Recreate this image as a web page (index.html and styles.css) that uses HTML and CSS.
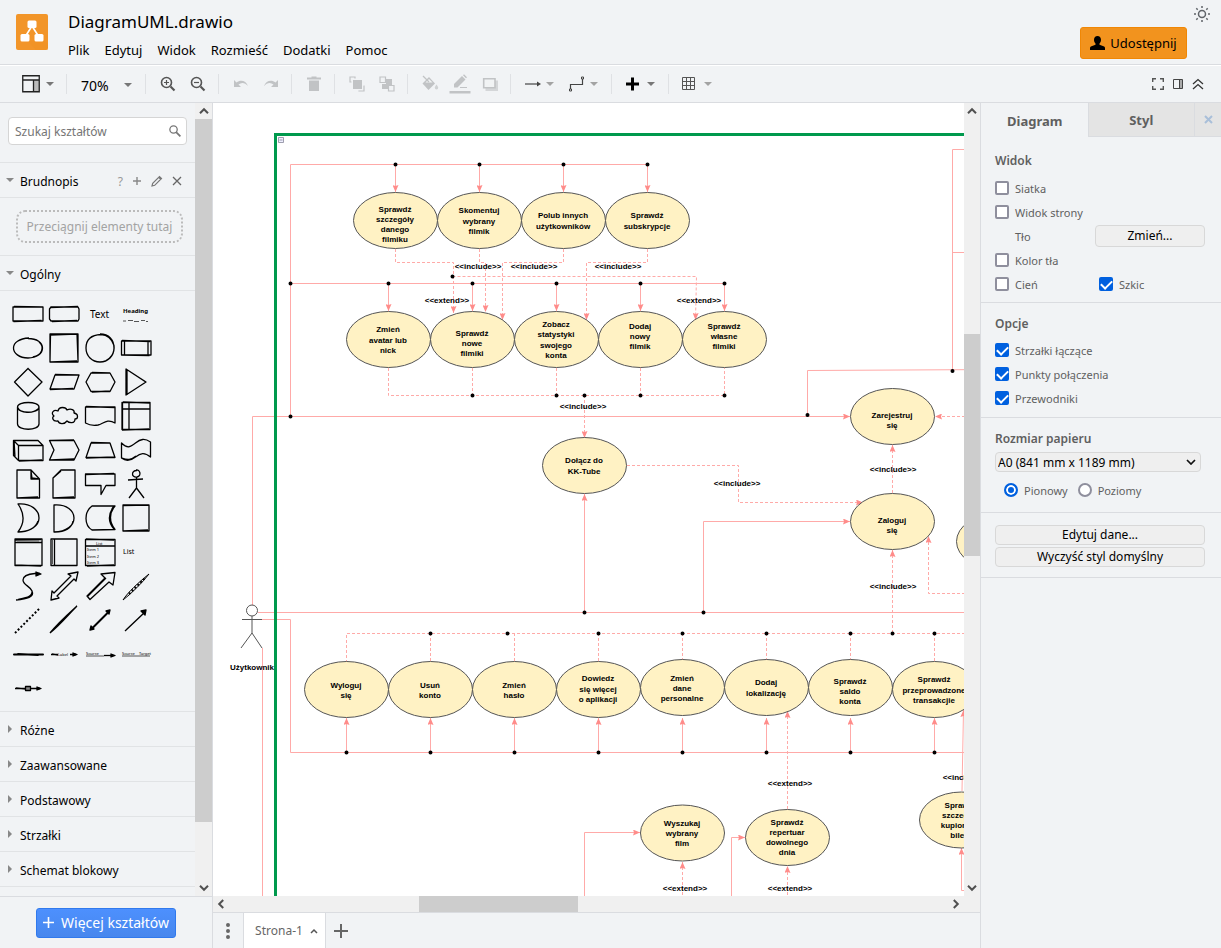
FILE: index.html
```html
<!DOCTYPE html>
<html lang="pl">
<head>
<meta charset="utf-8">
<title>DiagramUML.drawio</title>
<link rel="stylesheet" href="styles.css">
</head>
<body>
<svg class="defs" width="0" height="0" aria-hidden="true">
  <defs>
    <symbol id="caret" viewBox="0 0 8 4"><path d="M0 0h8L4 4z" fill="currentColor"/></symbol>
    <symbol id="chev-up" viewBox="0 0 10 10"><path d="M1 7.200 5 3.200l4 4" fill="none" stroke="#505050" stroke-width="2"/></symbol>
    <symbol id="chev-down" viewBox="0 0 10 10"><path d="M1 2.800 5 6.800l4-4" fill="none" stroke="#505050" stroke-width="2"/></symbol>
    <symbol id="chev-left" viewBox="0 0 10 10"><path d="M7.200 1 3.200 5l4 4" fill="none" stroke="#505050" stroke-width="2"/></symbol>
    <symbol id="chev-right" viewBox="0 0 10 10"><path d="M2.800 1l4 4-4 4" fill="none" stroke="#505050" stroke-width="2"/></symbol>
    <marker id="arrow" viewBox="0 0 7 6" refX="7" refY="3" markerWidth="7" markerHeight="6" markerUnits="userSpaceOnUse" orient="auto"><path class="head" d="M0 0l7 3-7 3 1-3z"/></marker>
    <ellipse id="node" rx="42" ry="28"/>
  </defs>
</svg>
<div class="app">
  <header class="header">
    <svg class="logo" width="32" height="36" viewBox="0 0 32 36"><rect width="32" height="36" rx="2" fill="#f29529"/><path d="M20 36 12 27l16 -1 4 4v6z" fill="#ee8d1f" opacity=".3"/><path d="M16 12 9 23M16 12l7 11" stroke="#fff" stroke-width="1.600"/><rect x="11.500" y="6.500" width="9" height="7.500" rx="1.500" fill="#fff"/><rect x="4.500" y="20" width="9" height="7.500" rx="1.500" fill="#fff"/><rect x="18.500" y="20" width="9" height="7.500" rx="1.500" fill="#fff"/></svg>
    <div class="heading">
      <h1 class="filename">DiagramUML.drawio</h1>
      <nav class="menubar"><button>Plik</button><button>Edytuj</button><button>Widok</button><button>Rozmieść</button><button>Dodatki</button><button>Pomoc</button></nav>
    </div>
    <button class="share"><svg width="15" height="14" viewBox="0 0 15 14"><path d="M7.500 0C9.600 0 11 1.500 11 3.700c0 1.700-.7 3-1.500 3.800v1.300l4 1.400c1 .4 1.500 1 1.500 2V14H0v-1.800c0-1 .5-1.600 1.500-2l4-1.400V7.500C4.700 6.700 4 5.400 4 3.700 4 1.500 5.400 0 7.500 0z"/></svg>Udostępnij</button>
    <button class="theme" aria-label="Motyw"><svg width="18" height="18" viewBox="0 0 18 18" fill="none" stroke="#5f6368" stroke-width="1.500"><circle cx="9" cy="9" r="3.500"/><path d="M9 1v2M9 15v2M1 9h2M15 9h2M3.300 3.300l1.400 1.400M13.300 13.300l1.400 1.400M3.300 14.700l1.400-1.400M13.300 4.700l1.400-1.400"/></svg></button>
  </header>

  <div class="toolbar">
    <div class="group"><button class="tool tool-layout" aria-label="Układ"><svg width="18" height="18" viewBox="0 0 18 18"><path d="M12 5h5v12h-5z" fill="#bbb"/><path d="M.75.75h16.500v16H.75zM.75 5h16.500M11.500 5v12" fill="none" stroke="#222" stroke-width="1.300"/></svg><svg class="caret" width="8" height="4"><use href="#caret"/></svg></button></div>
    <div class="group"><button class="tool tool-zoom"><span>70%</span><svg class="caret" width="8" height="4"><use href="#caret"/></svg></button></div>
    <div class="group">
      <button class="tool" aria-label="Powiększ"><svg width="16" height="16" viewBox="0 0 16 16" fill="none" stroke="#555"><circle cx="6.500" cy="6.500" r="5" stroke-width="1.600"/><path d="m10.500 10.500 4 4" stroke-width="2.200"/><path d="M4 6.500h5M6.500 4v5" stroke-width="1.200"/></svg></button>
      <button class="tool" aria-label="Pomniejsz"><svg width="16" height="16" viewBox="0 0 16 16" fill="none" stroke="#555"><circle cx="6.500" cy="6.500" r="5" stroke-width="1.600"/><path d="m10.500 10.500 4 4" stroke-width="2.200"/><path d="M4 6.500h5" stroke-width="1.200"/></svg></button>
    </div>
    <div class="group off">
      <button class="tool" aria-label="Cofnij"><svg width="16" height="10" viewBox="0 0 16 10"><path d="M1 1v7h7L5.500 5.500C8.500 3 12 3.500 15 7 13 1.500 7.500.5 3.500 3.500z" fill="currentColor"/></svg></button>
      <button class="tool" aria-label="Ponów"><svg width="16" height="10" viewBox="0 0 16 10"><path d="M15 1v7H8l2.500-2.500C7.500 3 4 3.500 1 7 3 1.500 8.500.5 12.500 3.500z" fill="currentColor"/></svg></button>
    </div>
    <div class="group off"><button class="tool" aria-label="Usuń"><svg width="16" height="16" viewBox="0 0 16 16"><path d="M1 1.500h4.500V.5h5v1H15v2H1zM3 4.500h10V15H3z" fill="currentColor"/></svg></button></div>
    <div class="group off">
      <button class="tool" aria-label="Na wierzch"><svg width="16" height="16" viewBox="0 0 16 16"><path d="M4 4h9v9H4z" fill="currentColor"/><path d="M2.500 6H1V1h5v1.500M14.500 10H15v5h-5v-.5" fill="none" stroke="currentColor" stroke-width="1.200"/></svg></button>
      <button class="tool" aria-label="Na spód"><svg width="16" height="16" viewBox="0 0 16 16"><path d="M7 3h6v6H9v4H3V8h4z" fill="currentColor"/><path d="M1 1h5.500v5.500H1zM9.500 9.500H15V15H9.500z" fill="#f1f3f5" stroke="currentColor" stroke-width="1.200"/></svg></button>
    </div>
    <div class="group off">
      <button class="tool" aria-label="Wypełnienie"><svg width="18" height="18" viewBox="0 0 18 18"><path d="M1.500 8.500 8 2l6 6.500L7.500 15z" fill="currentColor"/><path d="M4.500 7.500 8 4l3.500 3.500z" fill="#f1f3f4"/><path d="m2 1 6 6" stroke="currentColor" stroke-width="1.300"/><path d="M15.500 9.500c1 1.500 1.700 2.500 1.700 3.200a1.700 1.700 0 0 1-3.400 0c0-.7.7-1.700 1.700-3.200z" fill="currentColor" opacity=".7"/></svg></button>
      <button class="tool" aria-label="Kolor linii"><svg width="22" height="20" viewBox="0 0 22 20"><path d="M5 13.500V10L13 2l3.500 3.500-8 8zM14 1.200l1-.9 3 3-1 1z" fill="currentColor"/><path d="M11 13.500h7" stroke="currentColor"/><path d="M.5 17h21v2.500H.5z" fill="currentColor"/></svg></button>
      <button class="tool" aria-label="Cień"><svg width="16" height="16" viewBox="0 0 16 16"><path d="M3.500 4.500H16V15H3.500z" fill="currentColor" opacity=".6"/><path d="M1.700 2.700H13v9H1.700z" fill="#f1f3f4" stroke="currentColor" stroke-width="1.600"/></svg></button>
    </div>
    <div class="group">
      <button class="tool tool-menu light" aria-label="Połączenie"><svg width="16" height="16" viewBox="0 0 16 16"><path d="M0 8h13" stroke="#444" stroke-width="1.200"/><path d="M12 5.500 16 8l-4 2.500z" fill="#444"/></svg><svg class="caret" width="8" height="4"><use href="#caret"/></svg></button>
      <button class="tool tool-menu light" aria-label="Punkty trasy"><svg width="16" height="16" viewBox="0 0 16 16"><path d="M1.500 13V8.500h12V3" fill="none" stroke="#444" stroke-width="1.200"/><path d="M.5 13h2v2h-2zM12.500 1h2v2h-2z" fill="#fff" stroke="#444"/></svg><svg class="caret" width="8" height="4"><use href="#caret"/></svg></button>
    </div>
    <div class="group"><button class="tool tool-menu" aria-label="Wstaw"><svg width="16" height="16" viewBox="0 0 16 16"><path d="M0 8h13M6.500 1.500v13" stroke="#000" stroke-width="3"/></svg><svg class="caret" width="8" height="4"><use href="#caret"/></svg></button></div>
    <div class="group"><button class="tool tool-menu light" aria-label="Tabela"><svg width="16" height="16" viewBox="0 0 16 16"><path d="M-.5 1.500h12v12h-12zM-.5 5.500h12M-.5 9.500h12M3.500 1.500v12M7.500 1.500v12" fill="none" stroke="#555"/></svg><svg class="caret" width="8" height="4"><use href="#caret"/></svg></button></div>
    <div class="window-tools">
      <button aria-label="Pełny ekran"><svg width="12" height="12" viewBox="0 0 12 12" fill="none" stroke="#555" stroke-width="1.400"><path d="M.7 4V.7H4M8 .7h3.300V4M11.300 8v3.300H8M4 11.300H.7V8"/></svg></button>
      <button aria-label="Format"><svg width="10" height="10" viewBox="0 0 10 10"><path d="M6.500.5h3v9h-3z" fill="#aaa"/><path d="M.5.5h9v9h-9zM6.500.5v9" fill="none" stroke="#444"/></svg></button>
      <button aria-label="Zwiń"><svg width="12" height="12" viewBox="0 0 12 12" fill="none" stroke="#333" stroke-width="1.300"><path d="m1 6 5-4.500L11 6M1 11l5-4.500 5 4.500"/></svg></button>
    </div>
  </div>

  <div class="body">
    <aside class="sidebar">
      <div class="sidebar-main">
        <div class="sections">
          <div class="search"><label class="searchbox"><input type="text" placeholder="Szukaj kształtów" aria-label="Szukaj kształtów"><svg width="12" height="12" viewBox="0 0 14 14" fill="none" stroke="#777"><circle cx="5.300" cy="5.300" r="4.300" stroke-width="1.500"/><path d="m8.300 8.300 5 5" stroke-width="2"/></svg></label></div>
          <div class="title open"><svg width="8" height="4"><use href="#caret"/></svg><span>Brudnopis</span>
            <div class="actions"><button aria-label="Pomoc">?</button><button aria-label="Dodaj"><svg width="10" height="10" viewBox="0 0 10 10"><path d="M1 5h8M5 1v8" stroke="#888" stroke-width="1.400"/></svg></button><button aria-label="Edytuj"><svg width="12" height="12" viewBox="0 0 12 12" fill="none" stroke="#777" stroke-width="1.200"><path d="m1 11 .7-2.700L8.500 1.500l2 2-6.800 6.800zM7.700 2.300l2 2"/></svg></button><button aria-label="Zamknij"><svg width="10" height="10" viewBox="0 0 10 10"><path d="m1 1 8 8M9 1 1 9" stroke="#666" stroke-width="1.300"/></svg></button></div>
          </div>
          <div class="scratch"><div class="dropzone">Przeciągnij elementy tutaj</div></div>
          <div class="title open"><svg width="8" height="4"><use href="#caret"/></svg><span>Ogólny</span></div>
          <div class="palette">
            <svg viewBox="0 0 36 34"><path d="M3 10h30v14H3zM4 9.500 32 10M3.500 24.500l28-1"/></svg>
            <svg viewBox="0 0 36 34"><path d="M5 10h27l1 2v10l-1 2H5l-1.500-2V12zM4 10.500l28-1M6 24.500l25-1"/></svg>
            <svg viewBox="0 0 36 34"><text x="8" y="21" class="hand">Text</text></svg>
            <svg viewBox="0 0 36 34"><text x="5" y="16" class="hand h-bold">Heading</text><path class="thin" d="M5 24h3m2-.5h5m1 1h5m2-1h4m1 1h2"/></svg>

            <svg viewBox="0 0 36 34"><path d="M18 7.500c9 0 14.500 4 14.500 9.500S27 27 18 27 3.500 22 3.500 17 9 7.500 19 7M29 11c6 5 3 13-6 15"/></svg>
            <svg viewBox="0 0 36 34"><path d="M4 3h28v28H4zM4 4l27-1M5 31l26-1M4.500 3.500 4 30M31 3l1 27"/></svg>
            <svg viewBox="0 0 36 34"><path d="M18 3c9 0 14 6 14 14s-6 14-14 14S4 25 4 17 9 4 19 3.500c7 0 11 5 13 11 1 8-4 13-8 15"/></svg>
            <svg viewBox="0 0 36 34"><path d="M3.500 10H33v14H3.500zM6.500 10v14M30 10v14M4 9.500l28 1M3.500 24l28 .5"/></svg>

            <svg viewBox="0 0 36 34"><path d="M18 3.500 32 17 18 31 4.500 17zM5 16.500 18.500 3"/></svg>
            <svg viewBox="0 0 36 34"><path d="M9 10h24l-5 14H4zM9 9.500 32 10M4 24.500l23-1"/></svg>
            <svg viewBox="0 0 36 34"><path d="M9 8h19l5 9-5 9.500H9L4 17zM10 7.500 28 8M10 27l18-1"/></svg>
            <svg viewBox="0 0 36 34"><path d="M8 4v26l20-13zM8 4l19 12.500M9 30V5"/></svg>

            <svg viewBox="0 0 36 34"><path d="M7.500 8c0-6 21.500-6 21.500 0v17c0 7-21.500 7-21.500 0zM7.500 8c0 7 21.500 7 21.500 0M8 9c2 5 15 6 20 1"/></svg>
            <svg viewBox="0 0 36 34"><path d="M12 12c1-5 8-4 9-1 4-2 8 0 7 3 5 1 4 6 1 6 0 5-6 4-8 2-3 4-8 3-9 0-6 1-6-4-4-5-4-3 0-7 4-5z"/></svg>
            <svg viewBox="0 0 36 34"><path d="M3.500 8H33v16c-8-5-12 1-17 2-6 1-9 0-12.500-2zM4 7.500 33 8.500"/></svg>
            <svg viewBox="0 0 36 34"><path d="M4 3.500h28v27H4zM4 10h28M11 3.500v27M5 3l27 1M4 31l27-1M4.500 4v26"/></svg>

            <svg viewBox="0 0 36 34"><path d="M3.500 7.500H28l5 5v15H8.500l-5-5zM3.500 7.500l5 5H33M8.500 12.500v15M4 7l1 17M9 28l23-1"/></svg>
            <svg viewBox="0 0 36 34"><path d="M3.500 7.500H28l5 9.500-5 10H3.500L8 17zM5 7.500 28 7M4 27l24-1"/></svg>
            <svg viewBox="0 0 36 34"><path d="M9 10h19l5 14.500H4zM9 9.500 28 10M4 25l28-1"/></svg>
            <svg viewBox="0 0 36 34"><path d="M3.500 10c6 6 9 4 14 0s9-5 15-1v15c-6-5-10-4-15 0s-9 5-14 1zM4 25c7 3 10 1 14-2"/></svg>

            <svg viewBox="0 0 36 34"><path d="M7 3h14l8.500 9v19H7zM21 3v9h8.500M21 4l1 7 7 1M7 31l21-1"/></svg>
            <svg viewBox="0 0 36 34"><path d="M15 3h14v28H7V11zM7 11l8-7M7 31l21-1"/></svg>
            <svg viewBox="0 0 36 34"><path d="M3.500 7H33v11.500H24l-5 9v-9H3.500zM4 7.500 32 6.500"/></svg>
            <svg viewBox="0 0 36 34"><path d="M18 3c4-1 6 6 1 7-6 1-6-7 0-6.500M18.500 10v12M10 13l15-1M18.500 21 11 31M18.500 21 26 31"/></svg>

            <svg viewBox="0 0 36 34"><path d="M8 3c13-1 21 6 21 14S20 31 8 31c6-8 7-18 0-28zM8 31c10 0 18-4 20-11"/></svg>
            <svg viewBox="0 0 36 34"><path d="M8 4c13-1 20 6 20 13S21 31 8 31zM9 31c10 0 17-4 18-11"/></svg>
            <svg viewBox="0 0 36 34"><path d="M10 5h23c-6 7-6 16 0 23.500L10 29C2 24 2 11 10 5zM32 5c-6 8-6 16 0 23"/></svg>
            <svg viewBox="0 0 36 34"><path d="M5 4h26v26H5zM5 4.500 31 4M31 4v26M5 30l25-1"/></svg>

            <svg viewBox="0 0 36 34"><path d="M5 4h27v26.500H5zM5 7.500h27M5 5l26-.5M5 30l26 1"/><path class="thin" d="M7 6h22"/></svg>
            <svg viewBox="0 0 36 34"><path d="M5 4h26v26.500H5zM8.500 4v26M6 4h25"/><path class="thin" d="M6.500 5v24"/></svg>
            <svg viewBox="0 0 36 34"><path d="M3.500 4.500H33v26H3.500zM3.500 11H33M4 4l28 1M5 31l27-1"/><text x="14" y="9.500" class="tiny">List</text><text x="5" y="16" class="tiny">Item 1</text><text x="5" y="23" class="tiny">Item 2</text><text x="5" y="29" class="tiny">Item 3</text></svg>
            <svg viewBox="0 0 36 34"><text x="5" y="19" class="hand h-small">List</text></svg>

            <svg viewBox="0 0 36 34"><path d="M6 31c11-1 19-3 16-9-2-5-9-6-9-11s6-6 12-6.500h5M8 30.500c9-2 15-3 14-9"/><path class="fill" d="m26 3 5 2-5 2z"/></svg>
            <svg viewBox="0 0 36 34"><path d="m5 31 1-9 2 2L25 7l-3-2 10-2-2 9-2-2L11 27l2 2z"/></svg>
            <svg viewBox="0 0 36 34"><path d="M5 27 23 9l-4-4 14-1.500L31 16l-4-3L8 30.500zM6 27l18-18"/></svg>
            <svg viewBox="0 0 36 34"><path class="fine" d="M5 31C10 23 20 14 31 5M5 31C14 24 24 14 31 5"/><path class="dots" d="M11 25 27 9"/></svg>

            <svg viewBox="0 0 36 34"><path class="dots" d="M5 30 30 5"/></svg>
            <svg viewBox="0 0 36 34"><path d="M4 30C12 20 20 13 31 3M4 30C15 21 22 12 31 3"/></svg>
            <svg viewBox="0 0 36 34"><path d="M9 26 27 8M10 26 27 9"/><path class="fill" d="m8 27 1-4 3 3zM28 7l-1 4-3-3z"/></svg>
            <svg viewBox="0 0 36 34"><path d="M7 28 26 10M8 27 27 9"/><path class="fill" d="m28 7-1 5-4-4z"/></svg>

            <svg viewBox="0 0 36 34"><path class="fat" d="M4 17.500h29M8 17l20 1"/></svg>
            <svg viewBox="0 0 36 34"><path d="M5 17.500h7M24 17.500h6M6 17l6 1"/><path class="fill" d="m27 16 4 1.500-4 1.500z"/><text x="12" y="19" class="tiny">Label</text></svg>
            <svg viewBox="0 0 36 34"><text x="4" y="18" class="tiny">Source</text><path class="thin" d="M4 19h18"/><path d="M22 18.500h9"/><path class="fill" d="m29 17 4 1.500-4 1.500z"/></svg>
            <svg viewBox="0 0 36 34"><text x="4" y="18" class="tiny">Source</text><text x="21" y="18" class="tiny">Target</text><path class="thin" d="M4 19h28"/></svg>

            <svg viewBox="0 0 36 34"><path d="M5 17.500h25M6 17l10 1"/><path class="fill" d="m27 16 4 1.500-4 1.500z"/><path d="M15.500 15.500h5v4h-5z" class="env"/></svg>
          </div>
          <div class="title"><svg width="4" height="8" viewBox="0 0 4 8"><path d="M0 0v8l4-4z" fill="currentColor"/></svg><span>Różne</span></div>
          <div class="title"><svg width="4" height="8" viewBox="0 0 4 8"><path d="M0 0v8l4-4z" fill="currentColor"/></svg><span>Zaawansowane</span></div>
          <div class="title"><svg width="4" height="8" viewBox="0 0 4 8"><path d="M0 0v8l4-4z" fill="currentColor"/></svg><span>Podstawowy</span></div>
          <div class="title"><svg width="4" height="8" viewBox="0 0 4 8"><path d="M0 0v8l4-4z" fill="currentColor"/></svg><span>Strzałki</span></div>
          <div class="title"><svg width="4" height="8" viewBox="0 0 4 8"><path d="M0 0v8l4-4z" fill="currentColor"/></svg><span>Schemat blokowy</span></div>
        </div>
        <div class="scroll vertical side-scroll"><svg><use href="#chev-up"/></svg><i class="thumb"></i><i class="rest"></i><svg><use href="#chev-down"/></svg></div>
      </div>
      <div class="sidebar-foot"><button class="more"><svg width="11" height="11" viewBox="0 0 11 11"><path d="M0 5.500h11M5.500 0v11" stroke="#fff" stroke-width="1.600"/></svg>Więcej kształtów</button></div>
    </aside>

    <main class="center">
      <div class="canvas">
        <svg width="100%" height="100%" role="img" aria-label="Diagram przypadków użycia">
          <g transform="translate(-213 -103)">
            <g class="edges">
              <path d="M647.500 164.500H290.500V416.500M290.500 283.500H724.500M252.500 606V416.500M807.500 415V370.500L1000 369.500M952.500 371V149.500H1000M952.500 252.500H1000M258 612.500H1000M262 619.500H290.500V752.500H1000M262.500 648V1000"/>
              <g marker-end="url(#arrow)">
                <path d="M395.500 164V192"/><path d="M479.500 164V192"/><path d="M563.500 164V192"/><path d="M647.500 164V192"/>
                <path d="M388.500 283V311"/><path d="M472.500 283V311"/><path d="M556.500 283V311"/><path d="M640.500 283V311"/><path d="M724.500 283V311"/>
                <path d="M252.500 416.500H850"/><path d="M584.500 612V494"/><path d="M703.500 612V521.500H850"/>
                <path d="M346.500 752V718"/><path d="M430.500 752V718"/><path d="M514.500 752V718"/><path d="M598.500 752V718"/><path d="M682.500 752V718"/><path d="M766.500 752V718"/><path d="M850.500 752V718"/><path d="M934.500 752V718"/>
                <path d="M584.500 1000V832.500H640"/><path d="M731.500 1000V837.500H745"/><path d="M962 791 963.500 710"/><path d="M1000 890.500H961.500V848"/>
              </g>
              <g class="dashed">
                <path d="M1000 633.500H346.500V662M430.500 633V662M514.500 633V662M598.500 633V662M682.500 633V660M766.500 633V660M850.500 633V660M934.500 633V662M388.500 368V395.500H724.500V368M472.500 368V395M556.500 368V395M640.500 368V395"/>
                <g marker-end="url(#arrow)">
                  <path d="M395.500 249V262.500H453.500V313"/><path d="M479.500 249V262.500H485.500V312"/><path d="M563.500 249V262.500H502.500V320"/><path d="M647.500 249V262.500H586.500V320"/><path d="M452.500 276.500H696.500L695.500 320"/>
                  <path d="M584.500 395V438"/><path d="M627 465.500H738.500V502.500H863"/><path d="M892.500 633V550"/><path d="M892.500 493V445"/><path d="M1000 416.500H935"/><path d="M1000 593.500H928.500V536"/>
                  <path d="M787.500 809V711"/><path d="M682.500 1000V862"/><path d="M787.500 1000V866"/>
                </g>
              </g>
            </g>
            <path class="joints" d="M395.500 164.500h0M479.500 164.500h0M563.500 164.500h0M647.500 164.500h0M290.500 283.500h0M388.500 283.500h0M472.500 283.500h0M556.500 283.500h0M640.500 283.500h0M724.500 283.500h0M452.500 276.500h0M472.500 395.500h0M556.500 395.500h0M584.500 395.500h0M640.500 395.500h0M724.500 395.500h0M290.500 416.500h0M807.500 415h0M952.500 371h0M584.500 612.500h0M703.500 612.500h0M430.500 633.500h0M507.500 633.500h0M598.500 633.500h0M682.500 633.500h0M766.500 633.500h0M850.500 633.500h0M892.500 633.500h0M934.500 633.500h0M346.500 752.500h0M430.500 752.500h0M514.500 752.500h0M598.500 752.500h0M682.500 752.500h0M766.500 752.500h0M850.500 752.500h0M934.500 752.500h0"/>
            <rect class="system" x="275.500" y="134.500" width="1200" height="1200"/>
            <path d="M278.500 137.500h5v5h-5zM279.500 140h3" fill="#eef" stroke="#889" stroke-width=".8"/>
            <g class="nodes">
              <use href="#node" x="395.500" y="220.500"/><use href="#node" x="479.500" y="220.500"/><use href="#node" x="563.500" y="220.500"/><use href="#node" x="647.500" y="220.500"/>
              <use href="#node" x="388.500" y="339.500"/><use href="#node" x="472.500" y="339.500"/><use href="#node" x="556.500" y="339.500"/><use href="#node" x="640.500" y="339.500"/><use href="#node" x="724.500" y="339.500"/>
              <use href="#node" x="584.500" y="465.500"/><use href="#node" x="892.500" y="416.500"/><use href="#node" x="892.500" y="521.500"/><use href="#node" x="998.500" y="541.500"/>
              <use href="#node" x="346.500" y="689.500"/><use href="#node" x="430.500" y="689.500"/><use href="#node" x="514.500" y="689.500"/><use href="#node" x="598.500" y="689.500"/><use href="#node" x="682.500" y="687.500"/><use href="#node" x="766.500" y="687.500"/><use href="#node" x="850.500" y="687.500"/><use href="#node" x="934.500" y="689.500"/>
              <use href="#node" x="682.500" y="833"/><use href="#node" x="787.500" y="837.500"/><use href="#node" x="961.500" y="820"/>
            </g>
            <g class="actor"><circle cx="252" cy="610.500" r="5.500"/><path d="M252 616v17M242 619.500h20M252 633l-11 15M252 633l10 15"/></g>
            <g class="labels">
              <text y="212"><tspan x="395">Sprawdź</tspan><tspan x="395" dy="10">szczegóły</tspan><tspan x="395" dy="10">danego</tspan><tspan x="395" dy="10">filmiku</tspan></text>
              <text y="213"><tspan x="479">Skomentuj</tspan><tspan x="479" dy="11">wybrany</tspan><tspan x="479" dy="10">filmik</tspan></text>
              <text y="218"><tspan x="563">Polub innych</tspan><tspan x="563" dy="11">użytkowników</tspan></text>
              <text y="218"><tspan x="647">Sprawdź</tspan><tspan x="647" dy="11">subskrypcje</tspan></text>
              <text y="332"><tspan x="388">Zmień</tspan><tspan x="388" dy="11">avatar lub</tspan><tspan x="388" dy="10">nick</tspan></text>
              <text y="336"><tspan x="472">Sprawdź</tspan><tspan x="472" dy="10">nowe</tspan><tspan x="472" dy="10">filmiki</tspan></text>
              <text y="327"><tspan x="556">Zobacz</tspan><tspan x="556" dy="10">statystyki</tspan><tspan x="556" dy="11">swojego</tspan><tspan x="556" dy="10">konta</tspan></text>
              <text y="329"><tspan x="640">Dodaj</tspan><tspan x="640" dy="10">nowy</tspan><tspan x="640" dy="10">filmik</tspan></text>
              <text y="329"><tspan x="724">Sprawdź</tspan><tspan x="724" dy="10">własne</tspan><tspan x="724" dy="10">filmiki</tspan></text>
              <text y="463"><tspan x="584">Dołącz do</tspan><tspan x="584" dy="11">KK-Tube</tspan></text>
              <text y="418"><tspan x="892">Zarejestruj</tspan><tspan x="892" dy="10">się</tspan></text>
              <text y="523"><tspan x="892">Zaloguj</tspan><tspan x="892" dy="10">się</tspan></text>
              <text y="688"><tspan x="346">Wyloguj</tspan><tspan x="346" dy="10">się</tspan></text>
              <text y="688"><tspan x="430">Usuń</tspan><tspan x="430" dy="10">konto</tspan></text>
              <text y="688"><tspan x="514">Zmień</tspan><tspan x="514" dy="10">hasło</tspan></text>
              <text y="681"><tspan x="598">Dowiedz</tspan><tspan x="598" dy="11">się więcej</tspan><tspan x="598" dy="10">o aplikacji</tspan></text>
              <text y="681"><tspan x="682">Zmień</tspan><tspan x="682" dy="10">dane</tspan><tspan x="682" dy="10">personalne</tspan></text>
              <text y="685"><tspan x="766">Dodaj</tspan><tspan x="766" dy="11">lokalizację</tspan></text>
              <text y="684"><tspan x="850">Sprawdź</tspan><tspan x="850" dy="10">saldo</tspan><tspan x="850" dy="10">konta</tspan></text>
              <text y="682"><tspan x="934">Sprawdź</tspan><tspan x="934" dy="11">przeprowadzone</tspan><tspan x="934" dy="10">transakcjie</tspan></text>
              <text y="826"><tspan x="682">Wyszukaj</tspan><tspan x="682" dy="10">wybrany</tspan><tspan x="682" dy="10">film</tspan></text>
              <text y="825"><tspan x="787">Sprawdź</tspan><tspan x="787" dy="10">repertuar</tspan><tspan x="787" dy="10">dowolnego</tspan><tspan x="787" dy="10">dnia</tspan></text>
              <text y="808"><tspan x="961">Sprawdź</tspan><tspan x="961" dy="10">szczegóły</tspan><tspan x="961" dy="10">kupionego</tspan><tspan x="961" dy="10">biletu</tspan></text>
              <text x="252" y="670">Użytkownik</text>
              <text x="478" y="269">&lt;&lt;include&gt;&gt;</text><text x="534" y="269">&lt;&lt;include&gt;&gt;</text><text x="618" y="269">&lt;&lt;include&gt;&gt;</text>
              <text x="447" y="303">&lt;&lt;extend&gt;&gt;</text><text x="699" y="303">&lt;&lt;extend&gt;&gt;</text>
              <text x="583" y="409">&lt;&lt;include&gt;&gt;</text><text x="737" y="486">&lt;&lt;include&gt;&gt;</text><text x="893" y="472">&lt;&lt;include&gt;&gt;</text><text x="893" y="589">&lt;&lt;include&gt;&gt;</text>
              <text x="790" y="786">&lt;&lt;extend&gt;&gt;</text><text x="685" y="891">&lt;&lt;extend&gt;&gt;</text><text x="790" y="891">&lt;&lt;extend&gt;&gt;</text><text x="966" y="780">&lt;&lt;include&gt;&gt;</text>
            </g>
          </g>
        </svg>
      </div>
      <div class="scroll vertical canvas-v"><svg><use href="#chev-up"/></svg><i class="lead"></i><i class="thumb"></i><i class="rest"></i><svg><use href="#chev-down"/></svg></div>
      <div class="scroll horizontal canvas-h"><svg><use href="#chev-left"/></svg><i class="lead"></i><i class="thumb"></i><i class="rest"></i><svg><use href="#chev-right"/></svg></div>
      <div class="tabs">
        <button class="pages" aria-label="Strony"><svg width="4" height="16" viewBox="0 0 4 16"><path d="M2 2h0M2 8h0M2 14h0" stroke="#666" stroke-width="4" stroke-linecap="round"/></svg></button>
        <button class="page">Strona-1<svg width="8" height="8" viewBox="0 0 8 8"><path d="m1 6 3-3 3 3" fill="none" stroke="#555" stroke-width="1.500"/></svg></button>
        <button class="add" aria-label="Dodaj stronę"><svg width="14" height="14" viewBox="0 0 14 14"><path d="M0 7h14M7 0v14" stroke="#666" stroke-width="2"/></svg></button>
      </div>
    </main>

    <aside class="format">
      <div class="format-tabs"><button class="active">Diagram</button><button>Styl</button><button class="close" aria-label="Zamknij"><svg width="9" height="9" viewBox="0 0 9 9"><path d="m1 1 7 7M8 1 1 8" stroke="#a9bfd9" stroke-width="2"/></svg></button></div>
      <section class="first">
        <h2>Widok</h2>
        <div class="row"><label><input type="checkbox">Siatka</label></div>
        <div class="row"><label><input type="checkbox">Widok strony</label></div>
        <div class="row"><span class="indent">Tło</span><button class="btn change">Zmień...</button></div>
        <div class="row"><label><input type="checkbox">Kolor tła</label></div>
        <div class="row"><label class="half"><input type="checkbox">Cień</label><label><input type="checkbox" checked>Szkic</label></div>
      </section>
      <section class="options">
        <h2>Opcje</h2>
        <div class="row"><label><input type="checkbox" checked>Strzałki łączące</label></div>
        <div class="row"><label><input type="checkbox" checked>Punkty połączenia</label></div>
        <div class="row"><label><input type="checkbox" checked>Przewodniki</label></div>
      </section>
      <section class="paper">
        <h2>Rozmiar papieru</h2>
        <div class="select"><select aria-label="Rozmiar papieru"><option>A0 (841 mm x 1189 mm)</option></select><svg width="10" height="6" viewBox="0 0 10 6"><path d="m1 1 4 4 4-4" fill="none" stroke="#111" stroke-width="1.700"/></svg></div>
        <div class="row radios"><label><input type="radio" name="o" checked>Pionowy</label><label><input type="radio" name="o">Poziomy</label></div>
      </section>
      <section class="buttons"><button class="btn">Edytuj dane...</button><button class="btn">Wyczyść styl domyślny</button></section>
    </aside>
  </div>
</div>
</body>
</html>
```
FILE: styles.css
```css
* { box-sizing: border-box; }
body { margin: 0; font-family: "Noto Sans", "Open Sans", sans-serif; font-size: 13px; color: #000; background: #f1f3f4; }
button { font: inherit; color: inherit; background: none; border: 0; padding: 0; margin: 0; }
svg { display: block; flex: none; }
.defs { position: absolute; }
.app { display: flex; flex-direction: column; height: 100vh; overflow: hidden; background: #f1f3f5; }

.header { display: flex; height: 65px; flex: none; border-bottom: 1px solid #dadce0; padding: 0 10px 0 16px; }
.logo { margin-top: 14px; }
.heading { flex: 1; padding: 9px 0 0 20px; }
.filename { margin: 0; font-size: 17px; font-weight: 400; line-height: 26px; }
.menubar { display: flex; gap: 15px; margin-top: 4px; line-height: 22px; }
.share { display: flex; align-items: center; justify-content: center; gap: 5px; width: 107px; height: 32px; margin: 27px 6px 0 0; font-size: 13px; background: #f2931e; border: 1px solid #f08705; border-radius: 3px; }
.theme { align-self: flex-start; margin-top: 5px; }

.toolbar { display: flex; align-items: stretch; flex: none; height: 38px; padding: 0 17px 0 8px; border-top: 1px solid #fff; border-bottom: 1px solid #dadce0; }
.group { display: flex; align-items: center; padding: 0 6px; position: relative; }
.group + .group { margin-left: 1px; }
.group + .group::before { content: ""; position: absolute; left: -1px; top: 8px; bottom: 8px; width: 1px; background: #dfe1e4; }
.tool { display: flex; align-items: center; justify-content: center; width: 30px; height: 30px; padding-left: 2px; }
.tool-layout { width: 46px; gap: 6px; }
.tool-zoom { width: 66px; padding: 2px 7px 0 8px; font-size: 14px; justify-content: space-between; }
.tool-menu { width: 44px; gap: 5px; padding: 0; }
.tool-menu svg { overflow: visible; }
.caret { color: #777; }
.light .caret { color: #a3a3a3; }
.off { color: #c1c3c5; }
.window-tools { margin-left: auto; display: flex; align-items: center; gap: 9px; }

.body { display: flex; flex: 1; min-height: 0; }
.sidebar { display: flex; flex-direction: column; width: 213px; flex: none; border-right: 1px solid #dadce0; }
.sidebar-main { display: flex; flex: 1; min-height: 0; }
.sections { flex: 1; min-width: 0; overflow: hidden; }
.search { padding: 14px 8px 17px; border-bottom: 1px solid #e1e3e5; }
.searchbox { display: flex; align-items: center; height: 28px; padding: 0 5px 0 6px; background: #fff; border: 1px solid #d5d5d5; border-radius: 4px; }
.searchbox input { flex: 1; min-width: 0; border: 0; padding: 0; outline: 0; background: none; font: inherit; font-size: 12px; }
.searchbox input::placeholder { color: #757575; opacity: 1; }
.title { display: flex; align-items: center; height: 35px; padding: 2px 13px 0 6px; border-bottom: 1px solid #e1e3e5; color: #888; font-size: 12px; }
.title > svg { margin: 0 8px 3px 2px; }
.title.open > svg { margin: 0 6px 3px 0; }
.title span { color: #000; }
.actions { display: flex; align-items: center; gap: 9px; margin-left: auto; color: #999; }
.scratch { padding: 12px 12px 12px 16px; border-bottom: 1px solid #e1e3e5; }
.dropzone { height: 33px; border: 2px dotted #bbb; border-radius: 9px; text-align: center; font-size: 12px; line-height: 30px; color: #a3a3a3; white-space: nowrap; }
.palette { display: grid; grid-template-columns: repeat(4, 36px); grid-auto-rows: 34px; padding: 6px 0 6px 10px; border-bottom: 1px solid #e1e3e5; }
.palette svg { width: 36px; height: 34px; fill: none; stroke: #000; stroke-width: 1.3; stroke-linejoin: round; }
.palette text { fill: #000; stroke: none; }
.palette .fill { fill: #000; }
.palette .fine { stroke-width: 1; }
.palette .thin { stroke-width: 1; stroke: #555; }
.palette .fat { stroke-width: 2; stroke-linecap: round; }
.palette .dots { stroke-dasharray: 2 2; stroke-width: 2; }
.palette .env { fill: #888; }
.hand { font-size: 10px; }
.hand.h-bold { font-size: 6px; font-weight: 700; }
.hand.h-small { font-size: 7px; }
.tiny { font-size: 4px; }
.sidebar-foot { display: flex; justify-content: center; align-items: center; height: 52px; border-top: 1px solid #dadce0; }
.more { display: flex; align-items: center; justify-content: center; gap: 7px; width: 140px; height: 30px; font-size: 14px; color: #fff; background: linear-gradient(#4d90fe, #4787ed); border: 1px solid #3079ed; border-radius: 3px; white-space: nowrap; }

.scroll { display: flex; align-items: center; background: #f0f0f0; }
.scroll svg { width: 10px; height: 10px; margin: 3px; }
.vertical { flex-direction: column; }
.thumb { background: #cdcdcd; align-self: stretch; }
.side-scroll { width: 17px; flex: none; }
.side-scroll .thumb { flex: 701; }
.side-scroll .rest { flex: 58; }
.canvas-v .lead { flex: 215; }
.canvas-v .thumb { flex: 222; }
.canvas-v .rest { flex: 324; }
.canvas-h .lead { flex: 190; }
.canvas-h .thumb { flex: 159; }
.canvas-h .rest { flex: 370; }

.center { flex: 1; min-width: 0; display: grid; grid-template-columns: 1fr 16px; grid-template-rows: 1fr 16px 36px; }
.canvas { background: #fff; overflow: hidden; min-width: 0; min-height: 0; }
.canvas-h { padding-right: 16px; }
.canvas-h, .tabs { grid-column: 1 / -1; }
.edges path { fill: none; stroke: #ffaaa8; }
.dashed path { stroke-dasharray: 3 2; }
.head { fill: #ff8c8a; }
.joints { stroke: #000; stroke-width: 4; stroke-linecap: round; }
.system { fill: none; stroke: #00994d; stroke-width: 3; }
.nodes { fill: #fff2c4; stroke: #555; }
.actor { fill: #fff; stroke: #555; }
.labels { font: bold 8px/10px "Liberation Sans", Arial, sans-serif; text-anchor: middle; }
.tabs { display: flex; border-top: 1px solid #dadce0; color: #666; font-size: 12px; }
.pages, .add { display: flex; align-items: center; justify-content: center; width: 30px; }
.page { display: flex; align-items: center; justify-content: center; gap: 7px; width: 83px; padding-left: 4px; background: #fff; border: solid #dadce0; border-width: 0 1px; }

.format { width: 241px; flex: none; border-left: 1px solid #dadce0; font-size: 12px; color: #5f5f5f; }
.format-tabs { display: flex; height: 34px; font-size: 13px; }
.format-tabs button { flex: 1; font-weight: 700; background: #e4e4e4; border: solid #dadce0; border-width: 0 0 1px 1px; }
.format-tabs .active { background: none; border-color: transparent; padding-top: 2px; }
.format-tabs .close { flex: 0 0 27px; display: flex; align-items: center; justify-content: center; }
.format section { padding: 11px 16px 10px 14px; border-bottom: 1px solid #dadce0; }
.format .first { padding-top: 14px; padding-bottom: 6px; }
.format .options { padding-bottom: 7px; }
.format h2 { margin: 0; font-size: 12px; font-weight: 600; line-height: 20px; }
.first h2 { margin-bottom: 5px; }
.options h2 { margin-bottom: 4px; }
.paper h2 { margin-bottom: 3px; }
.row { display: flex; align-items: center; height: 24px; font-size: 11px; }
.row label { display: flex; align-items: center; gap: 6px; }
.half { width: 104px; }
.indent { padding-left: 20px; flex: 1; }
.btn { background: #efefef; border: 1px solid #d8d8d8; border-radius: 4px; height: 20px; font-size: 12px; line-height: 18px; color: #000; }
.change { width: 110px; height: 22px; }
.format input { appearance: none; margin: 0; width: 14px; height: 14px; border: 2px solid #8f8f9d; border-radius: 2px; background: #fff; }
.format input[type="checkbox"]:checked { background: #0060df; border-color: #0060df; display: grid; place-items: center; }
.format input[type="checkbox"]:checked::before { content: ""; width: 9px; height: 5px; margin-top: -2px; border: solid #fff; border-width: 0 0 2px 2px; transform: rotate(-45deg); }
.format input[type="radio"] { border-radius: 50%; }
.format input[type="radio"]:checked { border-color: #0060df; background: #0060df; box-shadow: inset 0 0 0 2px #fff; }
.select { position: relative; width: 206px; }
.select select { appearance: none; display: block; width: 100%; height: 20px; padding: 0 2px; font: inherit; color: #000; background: #efefef; border: 1px solid #d8d8d8; border-radius: 4px; }
.select svg { position: absolute; right: 5px; top: 7px; }
.radios { margin-top: 6px; padding-left: 9px; gap: 10px; }
.buttons { display: flex; flex-direction: column; gap: 2px; }
.format .buttons { padding-top: 12px; }
```
